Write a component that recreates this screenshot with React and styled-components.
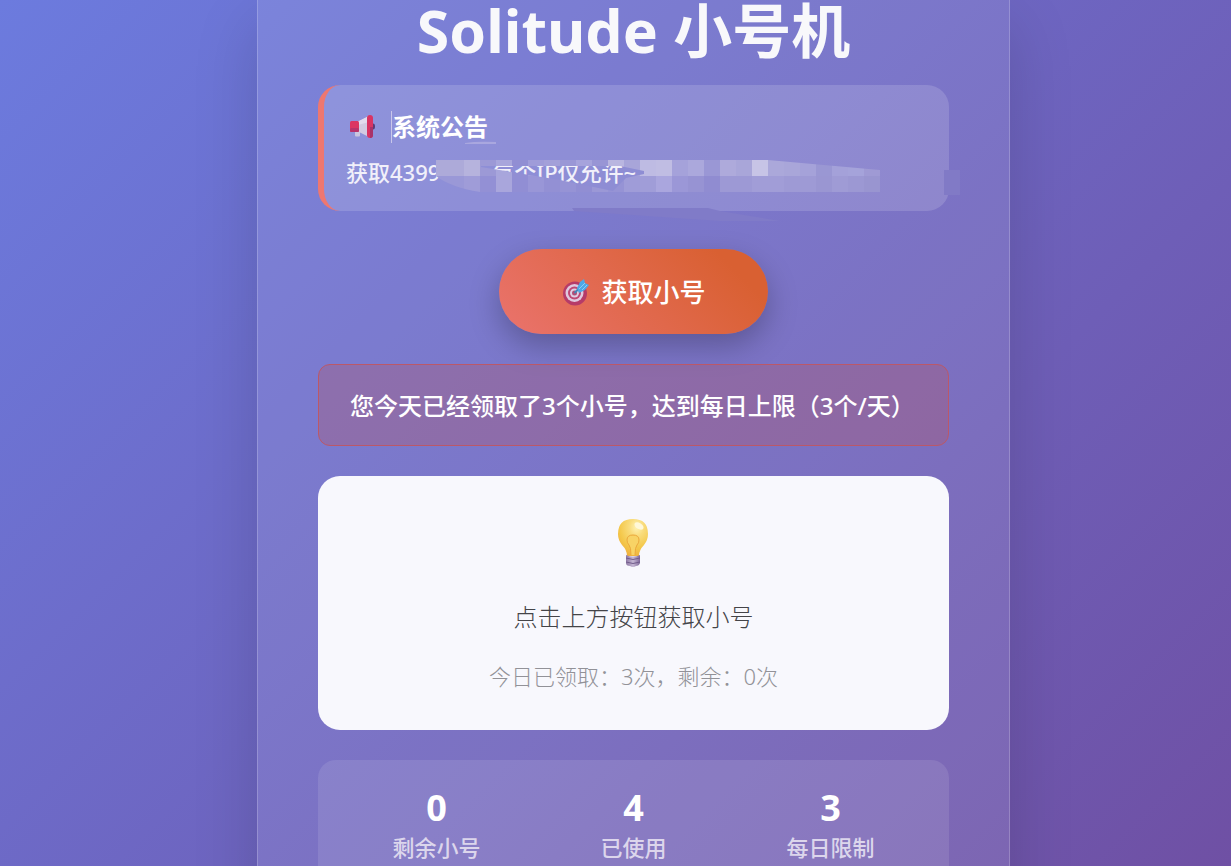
// Imports
import React from 'react';
import styled, { createGlobalStyle } from 'styled-components';

// Données
const stats = [
	{ id: 'reste', valeur: 0, label: '剩余小号' },
	{ id: 'utilise', valeur: 4, label: '已使用' },
	{ id: 'limite', valeur: 3, label: '每日限制' },
];

// Couleurs de la mosaïque, une par case de 16px
const ligneHaute = [
	'#adaad9', '#adaad9', '#b6b3dd', '#9c99d6', '#a8a6dc', '#918ed3', '#9f9cd9', '#a3a0d9', '#9a97d6', '#a6a3dc',
	'#9895d5', '#b9b6e0', '#a8a5d9', '#bebbe3', '#c0bde3', '#a5a2da', '#aba8dc', '#9a97d5', '#aeaadb', '#a9a6d9',
	'#c7c4e6', '#aba8da', '#a9a6d9', '#a5a2d9', '#9a97d3', '#a4a1d9', '#a5a3da', '#9f9ad4',
];
const ligneBasse = [
	'#9a98d7', '#9a98d7', '#9f9cd8', '#9390d5', '#a9a6dc', '#918ed4', '#9996d7', '#9390d4', '#9693d5', '#918ed3',
	'#9b98d6', '#9693d5', '#9f9cd8', '#a09dd8', '#aaa6de', '#9b97d7', '#9793d3', '#908cd1', '#9d99d5', '#9d99d5',
	'#a19dd7', '#a19dd7', '#9e9ad5', '#9e9ad5', '#9a96d2', '#9f9bd5', '#9c98d3', '#9995d0',
];

// Icônes
const Megaphone = () => (
	<Icone $taille="28px" viewBox="0 0 28 28" aria-hidden="true">
		<path d="M7 17h5v5.500q0 1-1 1H8q-1 0-1-1z" fill="#c9c5df" />
		<path d="M10 8.500 21 3v21l-11-5.500z" fill="#d3cbe2" />
		<path d="M10 8.500 21 3v6L10 12z" fill="#e2dced" />
		<rect x="2" y="8" width="9" height="11" rx="1.500" fill="#dc3562" />
		<rect x="2" y="15" width="9" height="4" rx="1.500" fill="#b8336b" />
		<ellipse cx="25" cy="13.500" rx="2" ry="3" fill="#5c3a75" />
		<rect x="19" y="2" width="6" height="23" rx="3" fill="#d93463" />
		<path d="M22 14h3v8q0 3-3 3z" fill="#a83269" />
	</Icone>
);
const Cible = () => (
	<Icone $taille="28px" viewBox="0 0 28 28" aria-hidden="true">
		<circle cx="14" cy="15.500" r="12" fill="#b63b68" />
		<circle cx="13.500" cy="15" r="9" fill="#dfc9df" />
		<circle cx="13.500" cy="15" r="6.500" fill="#be4774" />
		<circle cx="13.500" cy="15" r="4.500" fill="#decee2" />
		<circle cx="13.500" cy="15" r="2.500" fill="#b14d77" />
		<path d="m13.500 15 8-8" stroke="#4486b8" strokeWidth="2" />
		<path d="m16 10 3-6 4-3 1 4 4 2-4 5-6 3z" fill="#4ea8e6" />
		<path d="m18 11 6-6m-3 7 5-5" stroke="#8dcef4" strokeWidth="1" />
	</Icone>
);
const Ampoule = () => (
	<Icone $taille="54px" viewBox="0 0 54 54" aria-hidden="true">
		<defs>
			<radialGradient id="verre" cx="62%" cy="22%" r="80%">
				<stop offset="0" stopColor="#fff3b4" />
				<stop offset="0.300" stopColor="#f9dc7c" />
				<stop offset="0.700" stopColor="#f4c84b" />
				<stop offset="1" stopColor="#efb13e" />
			</radialGradient>
			<linearGradient id="culot">
				<stop offset="0" stopColor="#8f79a4" />
				<stop offset="0.500" stopColor="#c5b7d4" />
				<stop offset="1" stopColor="#80699a" />
			</linearGradient>
		</defs>
		<path d="M20 40q0-6-5-11Q11 24 11 18 11 3 26 3t15 15q0 6-4 11-5 5-5 11z" fill="url(#verre)" />
		<path d="M24 39q0-8-2-10-2-2-2-5 0-5 6-5t6 5q0 3-2 5-2 2-2 10" fill="#f8d365" stroke="#eba83c" strokeWidth="1" />
		<ellipse cx="32" cy="10" rx="5" ry="3" transform="rotate(32 32 10)" fill="#fff8d9" />
		<path d="M19 39q7 3 14 0v8q-1 3-4 3-3 2-6 0-4 0-4-3z" fill="url(#culot)" />
		<path d="M19 42q7 3 14 0m-14 4q7 3 14 0" fill="none" stroke="#725d8c" strokeWidth="1" />
	</Icone>
);

// Mosaïque posée sur le texte de l'annonce
const Mosaique = () => (
	<Calque viewBox="430 138 532 86" aria-hidden="true">
		<defs>
			<clipPath id="zone">
				<path
					clipRule="evenodd"
					d="M436 160H768L880 170V192H480Q450 187 436 176ZM481 166H620L644 171V174L626 178 613 191 560 180 481 167Z"
				/>
			</clipPath>
		</defs>
		<path d="M465 143q12-2 31-1v2h-31z" fill="#a9a7df" />
		<path d="M572 208H708L720 211 780 221H720L574 211Z" fill="#807bc8" />
		<path d="M944 170h16v25h-16z" fill="#817ac6" />
		<g clipPath="url(#zone)" shapeRendering="crispEdges">
			{ ligneHaute.map((couleur, i) => <rect key={ i } x={ 432 + i * 16 } y="160" width="16" height="16" fill={ couleur } />) }
			{ ligneBasse.map((couleur, i) => <rect key={ i } x={ 432 + i * 16 } y="176" width="16" height="16" fill={ couleur } />) }
		</g>
	</Calque>
);

// Composant
const App = () => {

	// Return
	return(
		<>
			<GlobalStyle/>
			<Page>
				<Carte>

					<Titre>Solitude 小号机</Titre>

					{/* Annonce */}
					<Annonce>
						<AnnonceTitre>
							<Megaphone/>
							<span>系统公告</span>
						</AnnonceTitre>
						<AnnonceTexte>
							<span>获取4399</span>
							<span>每个IP仅允许~</span>
						</AnnonceTexte>
						<Mosaique/>
					</Annonce>
					{/* Annonce */}

					<Bouton type="button">
						<Cible/>
						获取小号
					</Bouton>

					<Alerte role="alert">您今天已经领取了3个小号，达到每日上限（3个/天）</Alerte>

					{/* Resultat */}
					<Resultat>
						<Ampoule/>
						<Consigne>点击上方按钮获取小号</Consigne>
						<Compteur>今日已领取：3次，剩余：0次</Compteur>
					</Resultat>
					{/* Resultat */}

					{/* Stats */}
					<Stats>
						{
							stats.map(({ id, valeur, label }) => (
								<Stat key={ id }>
									<strong>{ valeur }</strong>
									<span>{ label }</span>
								</Stat>
							))
						}
					</Stats>
					{/* Stats */}

				</Carte>
			</Page>
		</>
	);

};

// Styled
const GlobalStyle = createGlobalStyle`
	*{
		box-sizing: border-box;
	}
	body{
		margin: 0;
		font-family: "Noto Sans", "Noto Sans CJK SC", sans-serif;
		color: white;
	}
	h1, h2, p{
		margin: 0;
	}
`;

const Page = styled.div`
	display: flex;
	justify-content: center;
	height: 100vh;
	padding: 0 0 0 36px;
	overflow: hidden;
	background: linear-gradient(135deg, #6c7bde 0%, #6f50a4 100%);
`;

const Carte = styled.main`
	display: flex;
	flex-direction: column;
	align-items: stretch;
	width: 100%;
	max-width: 753px;
	min-height: 100%;
	height: max-content;
	padding: 0 60px 60px;
	border: 1px solid rgba(255,255,255,0.2);
	border-width: 0 1px;
	background: rgba(255,255,255,0.1);
	box-shadow: 0 24px 60px rgba(0,0,0,0.15);
`;

const Icone = styled.svg`
	flex: none;
	width: ${ ({ $taille }) => $taille };
	height: ${ ({ $taille }) => $taille };
`;

const Titre = styled.h1`
	margin: 0 0 24px 0;
	font-size: 59px;
	line-height: 61px;
	text-align: center;
	color: #f8f8fb;
`;

const Annonce = styled.section`
	position: relative;
	margin: 0 0 38px 0;
	padding: 26px 22px 22px;
	border-left: 6px solid #ee7770;
	border-radius: 22px;
	background: rgba(255,255,255,0.15);
`;

const AnnonceTitre = styled.h2`
	display: flex;
	align-items: center;
	gap: 15px;
	margin: 0 0 12px 0;
	padding: 0 0 0 2px;
	font-size: 24px;
	line-height: 32px;
	span{
		border-left: 1px solid #c9c7ea;
	}
`;

const AnnonceTexte = styled.p`
	display: flex;
	gap: 52px;
	font-size: 22px;
	font-weight: 500;
	line-height: 34px;
	white-space: nowrap;
	color: #f1f0fa;
`;

const Calque = styled.svg`
	position: absolute;
	top: 53px;
	left: 106px;
	width: 532px;
	height: 86px;
`;

const Bouton = styled.button`
	display: flex;
	align-items: center;
	align-self: center;
	gap: 12px;
	margin: 0 0 30px 0;
	padding: 22px 62px 21px;
	border: none;
	border-radius: 43px;
	background: linear-gradient(45deg, #ea736d, #d96032 85%);
	box-shadow: 0 12px 30px rgba(0,0,0,0.25);
	font-family: inherit;
	font-size: 26px;
	font-weight: 500;
	line-height: 42px;
	color: white;
`;

const Alerte = styled.p`
	margin: 0 0 30px 0;
	padding: 25px 31px 23px;
	border: 1px solid #bb5868;
	border-radius: 12px;
	background: rgba(180,88,104,0.32);
	font-size: 24px;
	font-weight: 500;
	line-height: 32px;
	white-space: nowrap;
`;

const Resultat = styled.section`
	display: flex;
	flex-direction: column;
	align-items: center;
	margin: 0 0 30px 0;
	padding: 40px 30px 37px;
	border-radius: 22px;
	background: #f8f8fd;
	font-weight: 300;
`;

const Consigne = styled.p`
	margin: 29px 0 24px 0;
	font-size: 24px;
	line-height: 36px;
	color: #444448;
`;

const Compteur = styled.p`
	font-size: 22px;
	line-height: 34px;
	color: #929298;
`;

const Stats = styled.section`
	display: grid;
	grid-template-columns: repeat(3, 1fr);
	padding: 26px 20px;
	border-radius: 18px;
	background: rgba(255,255,255,0.1);
`;

const Stat = styled.div`
	display: flex;
	flex-direction: column;
	align-items: center;
	strong{
		font-size: 36px;
		line-height: 44px;
	}
	span{
		font-size: 22px;
		font-weight: 500;
		line-height: 34px;
		color: #dcd6ec;
	}
`;

// Export
export default App;
